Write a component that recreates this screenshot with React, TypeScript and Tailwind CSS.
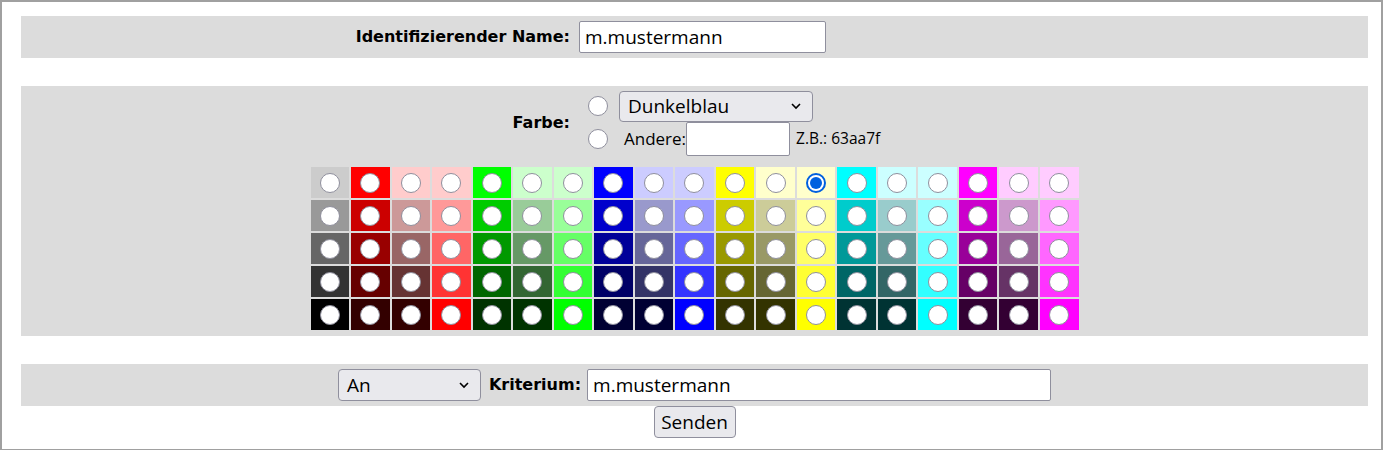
import React from "react";

const COLUMNS: string[][] = [
  ["#cccccc", "#999999", "#666666", "#333333", "#000000"],
  ["#ff0000", "#cc0000", "#990000", "#660000", "#330000"],
  ["#ffcccc", "#cc9999", "#996666", "#663333", "#330000"],
  ["#ffcccc", "#ff9999", "#ff6666", "#ff3333", "#ff0000"],
  ["#00ff00", "#00cc00", "#009900", "#006600", "#003300"],
  ["#ccffcc", "#99cc99", "#669966", "#336633", "#003300"],
  ["#ccffcc", "#99ff99", "#66ff66", "#33ff33", "#00ff00"],
  ["#0000ff", "#0000cc", "#000099", "#000066", "#000033"],
  ["#ccccff", "#9999cc", "#666699", "#333366", "#000033"],
  ["#ccccff", "#9999ff", "#6666ff", "#3333ff", "#0000ff"],
  ["#ffff00", "#cccc00", "#999900", "#666600", "#333300"],
  ["#ffffcc", "#cccc99", "#999966", "#666633", "#333300"],
  ["#ffffcc", "#ffff99", "#ffff66", "#ffff33", "#ffff00"],
  ["#00ffff", "#00cccc", "#009999", "#006666", "#003333"],
  ["#ccffff", "#99cccc", "#669999", "#336666", "#003333"],
  ["#ccffff", "#99ffff", "#66ffff", "#33ffff", "#00ffff"],
  ["#ff00ff", "#cc00cc", "#990099", "#660066", "#330033"],
  ["#ffccff", "#cc99cc", "#996699", "#663366", "#330033"],
  ["#ffccff", "#ff99ff", "#ff66ff", "#ff33ff", "#ff00ff"],
];

const label = "font-['DejaVu_Sans',sans-serif] font-bold text-[16px] text-black";
const ui = "font-['Open_Sans',sans-serif] text-black";

function Radio({ checked = false }: { checked?: boolean }) {
  return checked ? (
    <span className="w-5 h-5 rounded-full bg-white border-2 border-[#0060df] flex items-center justify-center">
      <span className="w-3 h-3 rounded-full bg-[#0060df]" />
    </span>
  ) : (
    <span className="w-5 h-5 rounded-full bg-white border border-[#8f8f9d] block" />
  );
}

function Chevron() {
  return (
    <svg width="12" height="8" viewBox="0 0 12 8" className="shrink-0">
      <path d="M2 2l4 4 4-4" fill="none" stroke="#000" strokeWidth="1.6" />
    </svg>
  );
}

export default function App() {
  const rows = [0, 1, 2, 3, 4];
  return (
    <div className="w-[1383px] h-[450px] bg-white border-2 border-b border-[#a0a0a0] pl-[19px] pr-[13px] pt-[14px] overflow-hidden">
      {/* Name */}
      <div className="h-[42px] bg-[#dcdcdc] flex items-center">
        <div className="w-[550px] flex justify-end pr-[1px]">
          <span className={label}>Identifizierender Name:</span>
        </div>
        <div className="h-[32px] w-[247px] bg-white border border-[#8f8f9d] rounded-[2px] flex items-center px-[5px] ml-[8px]">
          <span className={`${ui} text-[19px]`}>m.mustermann</span>
        </div>
      </div>

      {/* Farbe */}
      <div className="mt-[28px] h-[250px] bg-[#dcdcdc] flex flex-col items-center pt-[4px]">
        <div className="self-stretch flex items-center">
          <div className="w-[550px] flex justify-end pr-[1px]">
            <span className={label}>Farbe:</span>
          </div>
          <div className="flex flex-col pl-[17px]">
            <div className="flex items-center gap-[11px] h-[32px]">
              <Radio />
              <div className="w-[194px] h-[31px] bg-[#e9e9ed] border border-[#8f8f9d] rounded-[4px] flex items-center justify-between pl-[8px] pr-[10px]">
                <span className={`${ui} text-[19px]`}>Dunkelblau</span>
                <Chevron />
              </div>
            </div>
            <div className="flex items-center h-[34px]">
              <Radio />
              <span className={`${ui} text-[17px] ml-[16px]`}>Andere:</span>
              <div className="w-[104px] h-[34px] bg-white border border-[#8f8f9d] rounded-[2px]" />
              <span className={`${ui} text-[15.5px] ml-[6px]`}>Z.B.: 63aa7f</span>
            </div>
          </div>
        </div>
        <div className="mt-[11px] w-[768px] grid grid-cols-[repeat(19,minmax(0,1fr))] gap-[2px] bg-[#dcdcdc]">
          {rows.map((r) =>
            COLUMNS.map((col, c) => (
              <div
                key={`${r}-${c}`}
                className="h-[31px] flex items-center justify-center"
                style={{ backgroundColor: col[r] }}
              >
                <Radio checked={r === 0 && c === 12} />
              </div>
            ))
          )}
        </div>
      </div>

      {/* Kriterium */}
      <div className="mt-[28px] h-[42px] bg-[#dcdcdc] flex items-center justify-center gap-[8px]">
        <div className="w-[143px] h-[32px] bg-[#e9e9ed] border border-[#8f8f9d] rounded-[4px] flex items-center justify-between pl-[8px] pr-[10px]">
          <span className={`${ui} text-[19px]`}>An</span>
          <Chevron />
        </div>
        <span className={label}>Kriterium:</span>
        <div className="w-[464px] h-[32px] bg-white border border-[#8f8f9d] rounded-[2px] flex items-center px-[5px] -ml-[2px]">
          <span className={`${ui} text-[19px]`}>m.mustermann</span>
        </div>
      </div>
      <div className="flex justify-center">
        <div className="w-[82px] h-[32px] bg-[#e9e9ed] border border-[#8f8f9d] rounded-[4px] flex items-center justify-center">
          <span className={`${ui} text-[19px]`}>Senden</span>
        </div>
      </div>
    </div>
  );
}
